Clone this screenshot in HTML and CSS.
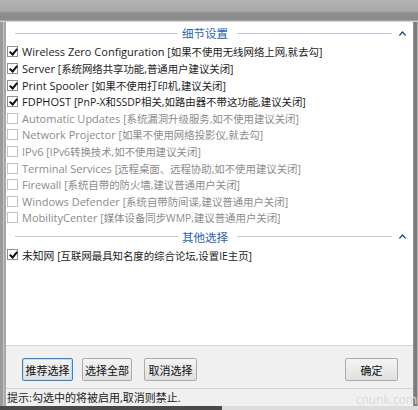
FILE: index.html
```html
<!DOCTYPE html>
<html lang="zh-CN">
<head>
<meta charset="utf-8">
<title>细节设置</title>
<link rel="stylesheet" href="styles.css">
</head>
<body>
<div class="titlebar"></div>
<div class="main">
  <div class="edge-left"></div>
  <div class="window">
    <div class="panel">
      <div class="group-head">
        <span class="line line-left"></span>
        <span class="group-title">细节设置</span>
        <span class="line line-right"></span>
        <svg class="chev" width="9" height="6" viewBox="0 0 9 6"><path d="M0.5 5.5 L4.5 1 L8.5 5.5 L6.8 5.5 L4.5 3 L2.2 5.5 Z" fill="#1d3f8a"/></svg>
      </div>
      <ul class="list">
        <li class="row"><span class="cb on"></span><span class="label">Wireless Zero Configuration <span class="desc">[如果不使用无线网络上网,就去勾]</span></span></li>
        <li class="row"><span class="cb on"></span><span class="label">Server <span class="desc">[系统网络共享功能,普通用户建议关闭]</span></span></li>
        <li class="row"><span class="cb on"></span><span class="label">Print Spooler <span class="desc">[如果不使用打印机,建议关闭]</span></span></li>
        <li class="row"><span class="cb on"></span><span class="label">FDPHOST <span class="desc">[PnP-X和SSDP相关,如路由器不带这功能,建议关闭]</span></span></li>
        <li class="row off"><span class="cb"></span><span class="label">Automatic Updates <span class="desc">[系统漏洞升级服务,如不使用建议关闭]</span></span></li>
        <li class="row off"><span class="cb"></span><span class="label">Network Projector <span class="desc">[如果不使用网络投影仪,就去勾]</span></span></li>
        <li class="row off"><span class="cb"></span><span class="label">IPv6 <span class="desc">[IPv6转换技术,如不使用建议关闭]</span></span></li>
        <li class="row off"><span class="cb"></span><span class="label">Terminal Services <span class="desc">[远程桌面、远程协助,如不使用建议关闭]</span></span></li>
        <li class="row off"><span class="cb"></span><span class="label">Firewall <span class="desc">[系统自带的防火墙,建议普通用户关闭]</span></span></li>
        <li class="row off"><span class="cb"></span><span class="label">Windows Defender <span class="desc">[系统自带防间谍,建议普通用户关闭]</span></span></li>
        <li class="row off"><span class="cb"></span><span class="label">MobilityCenter <span class="desc">[媒体设备同步WMP,建议普通用户关闭]</span></span></li>
      </ul>
      <div class="group-head second">
        <span class="line line-left"></span>
        <span class="group-title">其他选择</span>
        <span class="line line-right"></span>
        <svg class="chev" width="9" height="6" viewBox="0 0 9 6"><path d="M0.5 5.5 L4.5 1 L8.5 5.5 L6.8 5.5 L4.5 3 L2.2 5.5 Z" fill="#1d3f8a"/></svg>
      </div>
      <ul class="list list-other">
        <li class="row"><span class="cb on"></span><span class="label cjk">未知网 <span class="desc">[互联网最具知名度的综合论坛,设置IE主页]</span></span></li>
      </ul>
    </div>
    <div class="buttons">
      <button class="btn focus">推荐选择</button>
      <button class="btn b2">选择全部</button>
      <button class="btn b3">取消选择</button>
      <span class="spacer"></span>
      <button class="btn ok">确定</button>
    </div>
    <div class="status">提示:勾选中的将被启用,取消则禁止.<span class="watermark">cnunk.com</span></div>
  </div>
  <div class="edge-right"></div>
</div>
<div class="bottom">
  <span class="bottom-dark"></span>
</div>
</body>
</html>
```

FILE: styles.css
```css
* { box-sizing: border-box; }
html, body { margin: 0; padding: 0; }
body {
  width: 418px;
  height: 410px;
  overflow: hidden;
  background: #9c9c9c;
  font-family: "Open Sans", "Noto Sans CJK SC", sans-serif;
  font-size: 11px;
  color: #1c1c1c;
}
.titlebar {
  height: 22px;
  background: linear-gradient(#b4b4b4 0, #a9a9a9 11px, #8e8e8e 13px, #8a8a8a 20px, #c8c8c8 21px, #d8d8d8 22px);
}
.main {
  display: flex;
  height: 384px;
}
.edge-left {
  width: 6px;
  background: linear-gradient(90deg, #9a9a9a 0, #9a9a9a 3px, #c4c4c4 3px, #c4c4c4 4px, #a8a8a8 4px);
}
.edge-right {
  width: 5px;
  background: linear-gradient(90deg, #a8a8a8 0, #7c7c7c 1px, #7c7c7c 4px, #b0b0b0 4px);
}
.window {
  width: 407px;
  display: flex;
  flex-direction: column;
}
.panel {
  height: 323px;
  background: #ffffff;
  padding-top: 3px;
}
.group-head {
  height: 16px;
  display: flex;
  align-items: center;
  padding-left: 9px;
}
.group-head.second { margin-top: 2.7px; }
.line { height: 1px; background: #bccadb; }
.line-left { width: 163px; }
.line-right { width: 155px; }
.group-title {
  width: 59px;
  padding-left: 4px;
  color: #2b5fb4;
  font-size: 11.5px;
  white-space: nowrap;
}
.chev { margin-left: 6px; margin-top: -1px; }
.list {
  list-style: none;
  margin: 2.7px 0 0 0;
  padding: 0 0 0 1px;
}
.list-other { margin-top: 1.7px; }
.row {
  height: 16.6px;
  display: flex;
  align-items: center;
  white-space: nowrap;
}
.row.off { color: #8c8c8c; }
.desc { font-size: 10.4px; }
.label.cjk { font-size: 10.8px; }
.cb {
  width: 11px;
  height: 11px;
  border: 1px solid #c2c2c2;
  background: #fff;
  margin-right: 4px;
  position: relative;
  flex: none;
}
.cb.on { border-color: #8f8f8f; }
.cb.on::after {
  content: "";
  position: absolute;
  left: 2.5px;
  top: 0px;
  width: 3px;
  height: 6px;
  border-right: 2px solid #111;
  border-bottom: 2px solid #111;
  transform: rotate(40deg);
}
.buttons {
  height: 43px;
  background: #f0f0f0;
  border-top: 1px solid #d6d6d6;
  display: flex;
  align-items: flex-start;
  padding: 12px 15px 0 16px;
}
.btn {
  height: 23px;
  width: 51px;
  padding: 0;
  font-family: inherit;
  font-size: 11px;
  color: #111;
  border: 1px solid #acacac;
  border-radius: 2px;
  background: linear-gradient(#f4f4f4, #e0e0e0);
}
.btn.focus {
  border-color: #3b81c4;
  box-shadow: inset 0 0 0 1px #bfe0f8;
}
.btn.b2 { margin-left: 9px; width: 50px; }
.btn.b3 { margin-left: 12px; width: 53px; }
.btn.ok { width: 53px; }
.spacer { flex: 1; }
.status {
  height: 18px;
  background: #f0f0f0;
  border-top: 1px solid #d2d2d2;
  padding-left: 1px;
  line-height: 17px;
  color: #222;
  white-space: nowrap;
  position: relative;
}
.watermark {
  position: absolute;
  right: -4px;
  top: 4px;
  font-size: 12px;
  color: #dadada;
  line-height: 14px;
}
.bottom {
  height: 4px;
  display: flex;
  background: #dcdcdc;
}
.bottom-dark { width: 222px; background: #4a4a4a; }
```
